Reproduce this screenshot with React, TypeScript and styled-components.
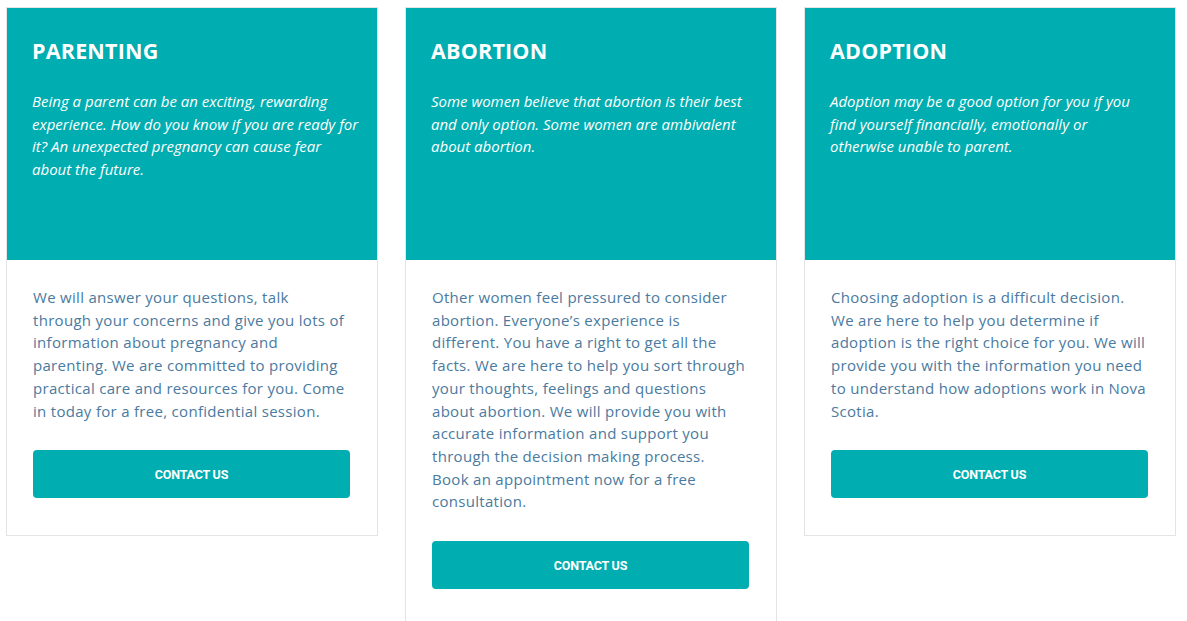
import styled, { createGlobalStyle } from "styled-components";

const GlobalStyle = createGlobalStyle`
  body {
    margin: 0;
    background: #ffffff;
    font-family: "Open Sans", "Liberation Sans", sans-serif;
  }
`;

const Page = styled.div`
  display: grid;
  grid-template-columns: repeat(3, 372px);
  column-gap: 27px;
  align-items: start;
  padding: 7px 0 0 6px;
`;

const Card = styled.div`
  border: 1px solid #e4e4e4;
  background: #ffffff;
  display: flex;
  flex-direction: column;
`;

const Header = styled.div`
  background: #00adb0;
  height: 252px;
  box-sizing: border-box;
  padding: 30px 17px 0 25px;
  color: #ffffff;
`;

const Title = styled.h2`
  margin: 0 0 26px;
  font-family: "Open Sans", "Liberation Sans", sans-serif;
  font-weight: 700;
  font-size: 21.5px;
  line-height: 26px;
  letter-spacing: 0.2px;
`;

const Lead = styled.p`
  margin: 0;
  font-style: italic;
  font-size: 15px;
  line-height: 22.7px;
  letter-spacing: 0;
  white-space: pre-line;
`;

const Body = styled.div`
  padding: 26px 27px 37px 26px;
`;

const Text = styled.p`
  margin: 0 0 28px;
  color: #4a7aa0;
  font-size: 15px;
  line-height: 22.7px;
  letter-spacing: 0.3px;
  white-space: pre-line;
`;

const Button = styled.button`
  display: block;
  width: 100%;
  height: 48px;
  border: 0;
  border-radius: 4px;
  background: #00adb0;
  color: #ffffff;
  font-family: Roboto, "Liberation Sans", sans-serif;
  font-weight: 700;
  font-size: 12.5px;
  letter-spacing: -0.2px;
  cursor: pointer;
`;

const cards = [
  {
    title: "PARENTING",
    lead: "Being a parent can be an exciting, rewarding experience. How do you know if you are ready for it? An unexpected pregnancy can cause fear about the future.",
    text: "We will answer your questions, talk through your concerns and give you lots of information about pregnancy and parenting. We are committed to providing practical care and resources for you. Come in today for a free, confidential session.",
  },
  {
    title: "ABORTION",
    lead: "Some women believe that abortion is their best and only option. Some women are ambivalent about abortion.",
    text: "Other women feel pressured to consider abortion. Everyone\u2019s experience is different. You have a right to get all the facts. We are here to help you sort through your thoughts, feelings and questions about abortion. We will provide you with accurate information and support you through the decision making process.\nBook an appointment now for a free consultation.",
  },
  {
    title: "ADOPTION",
    lead: "Adoption may be a good option for you if you find yourself financially, emotionally or\notherwise unable to parent.",
    text: "Choosing adoption is a difficult decision. We are here to help you determine if adoption is the right choice for you. We will provide you with the information you need to understand how adoptions work in Nova Scotia.",
  },
];

export default function App() {
  return (
    <>
      <GlobalStyle />
      <Page>
        {cards.map((c) => (
          <Card key={c.title}>
            <Header>
              <Title>{c.title}</Title>
              <Lead>{c.lead}</Lead>
            </Header>
            <Body>
              <Text>{c.text}</Text>
              <Button>CONTACT US</Button>
            </Body>
          </Card>
        ))}
      </Page>
    </>
  );
}
